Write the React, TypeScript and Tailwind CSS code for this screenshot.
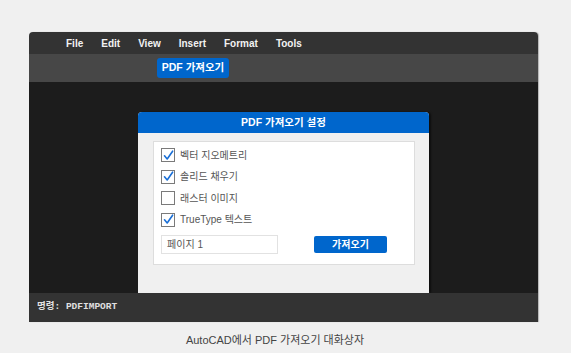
import React from "react";

const sans = "font-['Liberation_Sans','Noto_Sans_CJK_KR',sans-serif]";

function Check({ checked }: { checked: boolean }) {
  return (
    <span className="flex h-[14px] w-[14px] shrink-0 items-center justify-center border-[1.5px] border-[#7a7a7a] bg-white">
      {checked && (
        <svg width="11" height="11" viewBox="0 0 11 11" fill="none">
          <path d="M1.5 5.8 L4.2 9 L9.6 1.2" stroke="#1a6fd6" strokeWidth="1.6" strokeLinecap="round" strokeLinejoin="round" />
        </svg>
      )}
    </span>
  );
}

export default function App() {
  const menus = ["File", "Edit", "View", "Insert", "Format", "Tools"];
  const options = [
    { label: "벡터 지오메트리", checked: true },
    { label: "솔리드 채우기", checked: true },
    { label: "래스터 이미지", checked: false },
    { label: "TrueType 텍스트", checked: true },
  ];

  return (
    <div className={`min-h-[353px] w-[571px] bg-[#f0f0f0] pl-[29px] pt-[32px] ${sans}`}>
      <div className="flex w-[509px] flex-col overflow-hidden rounded-t-[4px] shadow-[1px_0_1px_rgba(0,0,0,0.25)]">
        {/* menu bar */}
        <div className="flex h-[22px] items-center gap-[18px] bg-[#333333] pl-[37px] text-[10px] font-bold text-[#f2f2f2]">
          {menus.map((m) => (
            <span key={m}>{m}</span>
          ))}
        </div>

        {/* toolbar */}
        <div className="flex h-[28px] items-center bg-[#474747] pl-[128px]">
          <button className="flex h-[20px] w-[72px] items-center justify-center rounded-[3px] bg-[#0066cc] text-[10.5px] font-bold text-white">
            PDF 가져오기
          </button>
        </div>

        {/* canvas */}
        <div className="flex h-[211px] flex-col items-center bg-[#1c1c1c] pt-[30px]">
          <div className="flex h-[181px] w-[291px] flex-col rounded-t-[4px] bg-[#f0f0f0] shadow-[2px_0_2px_rgba(0,0,0,0.5)]">
            <div className="flex h-[21px] items-center justify-center rounded-t-[4px] bg-[#0066cc] text-[10.5px] font-bold text-white">
              PDF 가져오기 설정
            </div>
            <div className="ml-[15px] mr-[14px] mt-[8px] flex flex-col border border-[#dddddd] bg-white px-[7px] pb-[10px] pt-[6px]">
              <div className="flex flex-col gap-[7.5px]">
                {options.map((o) => (
                  <label key={o.label} className="flex h-[14px] items-center gap-[5px] text-[10px] text-[#555555]">
                    <Check checked={o.checked} />
                    <span>{o.label}</span>
                  </label>
                ))}
              </div>
              <div className="mt-[8px] flex items-center">
                <div className="flex h-[19px] w-[117px] items-center border border-[#e2e2e2] bg-white px-[5px] text-[10px] text-[#555555]">
                  페이지 1
                </div>
                <button className="ml-[36px] flex h-[17px] w-[73px] items-center justify-center rounded-[2px] bg-[#0066cc] text-[10px] font-bold text-white">
                  가져오기
                </button>
              </div>
            </div>
          </div>
        </div>

        {/* command line */}
        <div className="flex h-[29px] items-center bg-[#333333] pl-[8px] font-['Liberation_Mono','Noto_Sans_CJK_KR',monospace] text-[9.5px] font-bold text-[#e0e0e0]">
          명령: PDFIMPORT
        </div>
      </div>
      <p className="mt-[10px] w-[509px] pr-[17px] text-center text-[11px] text-[#444444]">
        AutoCAD에서 PDF 가져오기 대화상자
      </p>
    </div>
  );
}
